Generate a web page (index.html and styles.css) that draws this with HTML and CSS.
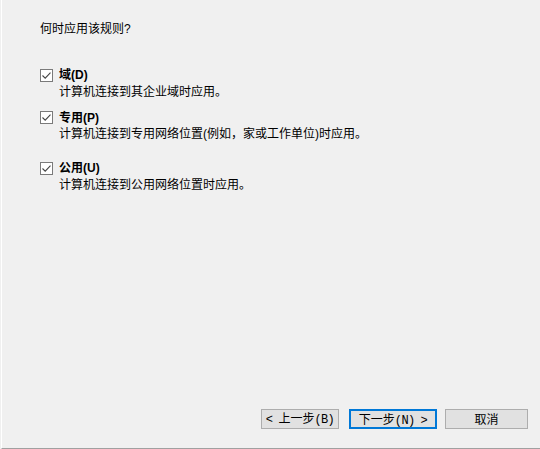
FILE: index.html
```html
<!DOCTYPE html>
<html lang="zh-CN">
<head>
    <meta charset="UTF-8">
    <title>新建入站规则向导 - 配置文件</title>
    <link rel="stylesheet" href="styles.css">
</head>
<body>
    <div class="page">
        <p class="question">何时应用该规则?</p>

        <div class="profiles">
            <div class="profile">
                <label class="profile-title"><span class="check"><svg width="11" height="11" viewBox="0 0 11 11"><path d="M1.5 5.5 L4.2 8.2 L9.5 2.6" fill="none" stroke="#444" stroke-width="1.1"/></svg></span>域(D)</label>
                <div class="profile-desc">计算机连接到其企业域时应用。</div>
            </div>
            <div class="profile">
                <label class="profile-title"><span class="check"><svg width="11" height="11" viewBox="0 0 11 11"><path d="M1.5 5.5 L4.2 8.2 L9.5 2.6" fill="none" stroke="#444" stroke-width="1.1"/></svg></span>专用(P)</label>
                <div class="profile-desc">计算机连接到专用网络位置(例如，家或工作单位)时应用。</div>
            </div>
            <div class="profile profile-last">
                <label class="profile-title"><span class="check"><svg width="11" height="11" viewBox="0 0 11 11"><path d="M1.5 5.5 L4.2 8.2 L9.5 2.6" fill="none" stroke="#444" stroke-width="1.1"/></svg></span>公用(U)</label>
                <div class="profile-desc">计算机连接到公用网络位置时应用。</div>
            </div>
        </div>

        <div class="buttons">
            <button class="btn btn-back"><span class="key arrow-left">&lt;</span>上一步<span class="key">(B)</span></button>
            <button class="btn btn-next">下一步<span class="key">(N)</span><span class="key arrow-right">&gt;</span></button>
            <button class="btn btn-cancel">取消</button>
        </div>
    </div>
</body>
</html>
```

FILE: styles.css
```css
html, body {
    margin: 0;
    padding: 0;
    background-color: #f0f0f0;
}
body {
    font-family: "Liberation Sans", "Noto Sans CJK SC", sans-serif;
    font-size: 12px;
    line-height: 16px;
    color: #000;
}
.page {
    box-sizing: border-box;
    height: 449px;
    margin-left: 1px;
    border-left: 1px solid #ffffff;
    border-bottom: 1px solid #a0a0a0;
    padding: 21px 12px 0 38px;
    display: flex;
    flex-direction: column;
}
.question {
    margin: 0;
}
.profiles {
    margin-top: 30px;
}
.profile {
    margin-bottom: 10px;
}
.profile:nth-child(2) {
    margin-bottom: 18px;
}
.profile-title {
    display: flex;
    align-items: center;
    font-weight: bold;
    height: 16px;
}
.check {
    box-sizing: border-box;
    width: 13px;
    height: 13px;
    margin-right: 6px;
    border: 1px solid #7a7a7a;
    background-color: #ffffff;
    display: flex;
    align-items: center;
    justify-content: center;
}
.profile-desc {
    padding-left: 19px;
    margin-top: 0.5px;
}
.buttons {
    margin-top: auto;
    margin-bottom: 19px;
    display: flex;
    justify-content: flex-end;
}
.btn {
    box-sizing: border-box;
    height: 20px;
    padding: 0;
    font-family: "Noto Sans CJK SC", sans-serif;
    font-size: 12px;
    line-height: 16px;
    color: #000;
    background-color: #e1e1e1;
    border: 1px solid #adadad;
    white-space: nowrap;
}
.btn .key {
    font-family: "Liberation Mono", monospace;
    font-size: 12px;
    letter-spacing: -0.6px;
}
.btn .arrow-left {
    margin-right: 6px;
}
.btn .arrow-right {
    margin-left: 6px;
}
.btn-back {
    width: 78px;
}
.btn-next {
    width: 88px;
    margin-left: 10px;
    border: 2px solid #0078d7;
}
.btn-cancel {
    width: 83px;
    margin-left: 8px;
}
```
